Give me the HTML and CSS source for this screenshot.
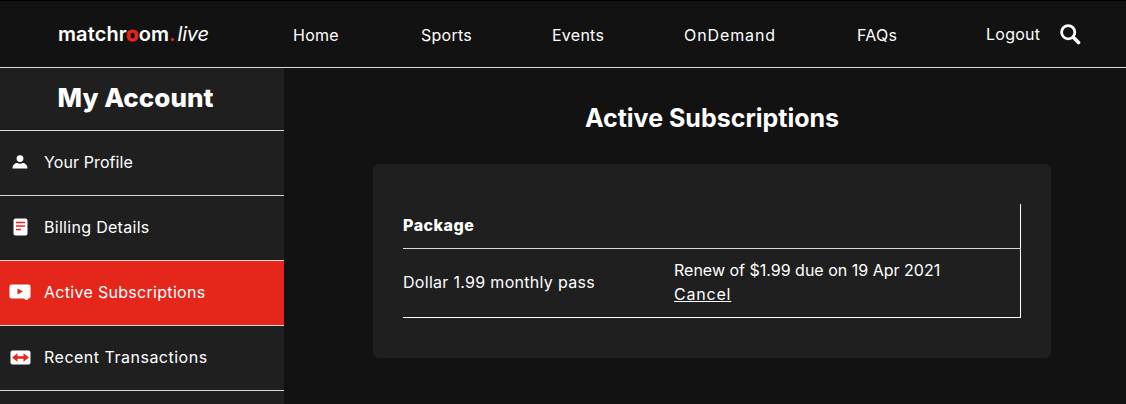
FILE: index.html
```html
<!DOCTYPE html>
<html lang="en">
<head>
  <meta charset="UTF-8" />
  <title>My Account</title>
  <link rel="stylesheet" href="styles.css">
</head>
<body>
  <header class="topbar">
    <a class="logo">matchr<span class="logo-o">o</span>om<span class="logo-dot">.</span><em>live</em></a>
    <nav class="nav">
      <a>Home</a>
      <a>Sports</a>
      <a>Events</a>
      <a class="nav-wide">OnDemand</a>
      <a>FAQs</a>
      <a class="logout">Logout</a>
    </nav>
    <svg class="search" viewBox="0 0 21 21" width="21" height="21">
      <circle cx="8.200" cy="8.200" r="6.600" fill="none" stroke="#fff" stroke-width="2.800"/>
      <path d="M13.500 13.500l5 5" stroke="#fff" stroke-width="3.600" stroke-linecap="round"/>
    </svg>
  </header>

  <div class="page">
    <aside class="sidebar">
      <h2>My Account</h2>
      <a class="side-item side-tight">
        <span class="side-icon">
          <svg viewBox="0 0 16 14" width="16" height="14">
            <circle cx="8" cy="3.600" r="3.400" fill="#fff"/>
            <path d="M0.500 13.500c0-4 3-5.600 4.600-5.600 1.600 1 4.200 1 5.800 0 1.600 0 4.600 1.600 4.600 5.600z" fill="#fff"/>
          </svg>
        </span>
        Your Profile
      </a>
      <a class="side-item">
        <span class="side-icon">
          <svg viewBox="0 0 15 18" width="15" height="18">
            <rect x="0.500" y="0.500" width="14" height="17" rx="2" fill="#fff"/>
            <path d="M3 4.500h9M3 8h9M3 11.500h5" stroke="#e8261c" stroke-width="1.300"/>
          </svg>
        </span>
        Billing Details
      </a>
      <a class="side-item active">
        <span class="side-icon">
          <svg viewBox="0 0 22 16" width="22" height="16">
            <rect x="0.500" y="0.500" width="21" height="14" rx="2" fill="#fff"/>
            <path d="M15 14h4.500l-1 2h-2z" fill="#fff"/>
            <path d="M8.500 4.500l5.500 3-5.500 3z" fill="#e5261b"/>
          </svg>
        </span>
        Active Subscriptions
      </a>
      <a class="side-item side-loose">
        <span class="side-icon">
          <svg viewBox="0 0 21 15" width="21" height="15">
            <rect x="0.500" y="0.500" width="20" height="14" rx="2" fill="#fff"/>
            <path d="M6 7.500h9" stroke="#e5261b" stroke-width="2.600"/>
            <path d="M7.500 3.300l-5.500 4.200 5.500 4.200zM13.500 3.300l5.500 4.200-5.500 4.200z" fill="#e5261b"/>
          </svg>
        </span>
        Recent Transactions
      </a>
    </aside>

    <main class="content">
      <h1>Active Subscriptions</h1>
      <section class="card">
        <table class="subs">
          <thead>
            <tr><th colspan="2">Package</th></tr>
          </thead>
          <tbody>
            <tr>
              <td class="pkg">Dollar 1.99 monthly pass</td>
              <td>Renew of $1.99 due on 19 Apr 2021<br><a class="cancel">Cancel</a></td>
            </tr>
          </tbody>
        </table>
      </section>
    </main>
  </div>
</body>
</html>
```

FILE: styles.css
```css
html, body {
  margin: 0;
  height: 404px;
  overflow: hidden;
}

body {
  background: #121212;
  color: #fff;
  font-family: "Inter", "Liberation Sans", sans-serif;
  font-size: 16px;
}

/* Top bar */
.topbar {
  display: flex;
  align-items: center;
  height: 66px;
  border-top: 1px solid #000;
  border-bottom: 1px solid #d8d8d8;
}

.logo {
  width: 293px;
  padding-left: 58px;
  box-sizing: border-box;
  font-size: 20px;
  font-weight: 600;
  letter-spacing: 0.1px;
}

.logo em {
  font-weight: 400;
  margin-left: 2px;
  letter-spacing: -0.2px;
}

.logo-o {
  color: #e5261b;
  -webkit-text-stroke: 1px #e5261b;
}

.logo-dot {
  color: #e5261b;
}

.nav {
  display: grid;
  grid-template-columns: 128px 131px 132px 173px 129px 74px;
  padding-top: 2px;
  letter-spacing: 0.25px;
}

.nav-wide {
  letter-spacing: 0.9px;
}

.logout {
  margin-top: -1px;
}

.search {
  display: block;
}

/* Sidebar */
.page {
  display: flex;
  height: 336px;
}

.sidebar {
  width: 284px;
  background: #1f1f1f;
  flex-shrink: 0;
}

.sidebar h2 {
  margin: 0;
  height: 62px;
  padding-right: 13px;
  line-height: 60px;
  text-align: center;
  font-size: 26px;
  font-weight: 800;
}

.side-item {
  display: flex;
  align-items: center;
  height: 62px;
  padding-bottom: 2px;
  border-top: 1px solid #d8d8d8;
  letter-spacing: 0.3px;
}

.side-item:last-child {
  border-bottom: 1px solid #d8d8d8;
}

.side-tight {
  letter-spacing: 0.1px;
}

.side-loose {
  letter-spacing: 0.5px;
}

.side-icon {
  display: flex;
  justify-content: center;
  width: 40px;
  margin-right: 4px;
}

.side-item.active {
  background: #e5261b;
}

/* Main */
.content {
  flex: 1;
  padding: 0 75px 0 89px;
}

.content h1 {
  margin: 0;
  padding-top: 34px;
  height: 62px;
  line-height: 32px;
  text-align: center;
  font-size: 25px;
  font-weight: 700;
}

.card {
  background: #1f1f1f;
  border-radius: 6px;
  padding: 40px 30px;
  height: 194px;
  box-sizing: border-box;
}

.subs {
  width: 618px;
  border-collapse: collapse;
  border-right: 1px solid #fff;
  border-bottom: 1px solid #fff;
}

.subs th {
  text-align: left;
  font-weight: 800;
  height: 41px;
  padding: 0 0 3px;
  border-bottom: 1px solid #d8d8d8;
  letter-spacing: 0.5px;
}

.subs td {
  padding: 0 0 2px;
  height: 66px;
  line-height: 24px;
}

.subs .pkg {
  width: 271px;
  letter-spacing: 0.3px;
}

.cancel {
  text-decoration: underline;
  letter-spacing: 0.8px;
}
```
